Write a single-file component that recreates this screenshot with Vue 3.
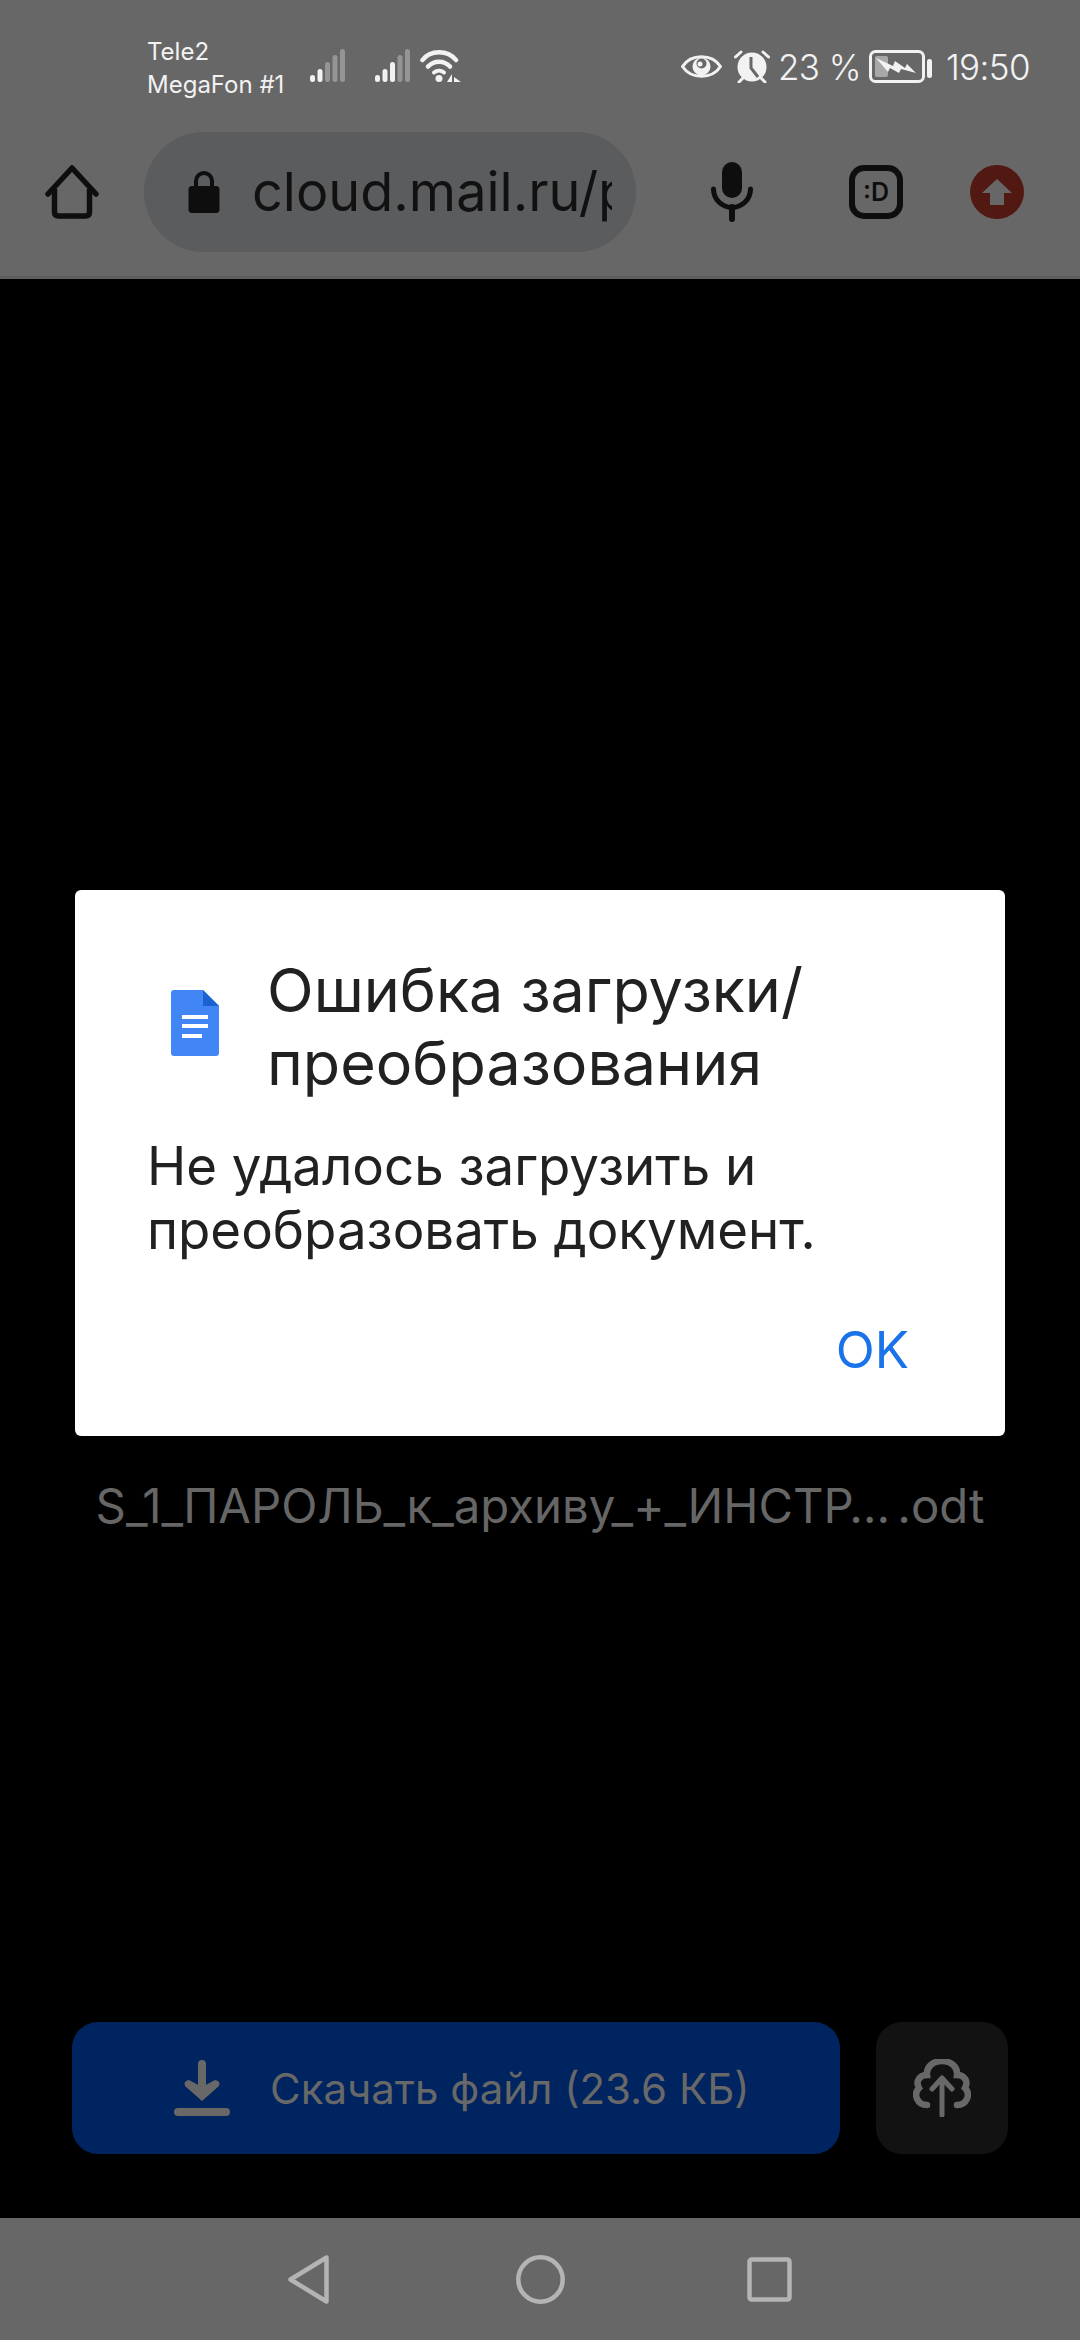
<script setup>
const simBars = [
  { x: 0, y: 26, h: 7 },
  { x: 7.5, y: 20, h: 13 },
  { x: 15, y: 13, h: 20 },
  { x: 22.5, y: 6, h: 27 },
  { x: 30, y: 0, h: 33 }
]
</script>

<template>
  <div class="screen">
    <header class="top">
      <div class="status">
        <div class="carriers">
          <span>Tele2</span>
          <span>MegaFon #1</span>
        </div>
        <svg class="sim" width="35" height="33" viewBox="0 0 35 33">
          <rect v-for="(b, i) in simBars" :key="i" :x="b.x" :y="b.y" width="5" :height="b.h" rx="2.500" :fill="i < 2 ? '#f2f2f2' : '#959595'" />
        </svg>
        <svg class="sim sim-b" width="35" height="33" viewBox="0 0 35 33">
          <rect v-for="(b, i) in simBars" :key="i" :x="b.x" :y="b.y" width="5" :height="b.h" rx="2.500" :fill="i < 3 ? '#f2f2f2' : '#959595'" />
        </svg>
        <svg class="wifi" width="41" height="33" viewBox="0 0 41 33">
          <path d="M2.500 11C10 0.500 28 0.500 36 11" fill="none" stroke="#f2f2f2" stroke-width="4.500" stroke-linecap="round" />
          <path d="M8 17.500C14 11 24 11 30 17.500" fill="none" stroke="#f2f2f2" stroke-width="4.500" stroke-linecap="round" />
          <path d="M14 23.500C17 21 21 21 24 23.500" fill="none" stroke="#f2f2f2" stroke-width="4" stroke-linecap="round" />
          <circle cx="19" cy="29.500" r="3.500" fill="#f2f2f2" />
          <path d="M32 25V33H27ZM34 25V33H41L34 28Z" fill="#f2f2f2" />
        </svg>
        <div class="status-right">
          <svg class="eye" width="41" height="27" viewBox="0 0 41 27">
            <path d="M1.500 13.500C10 0.500 31 0.500 39.500 13.500C31 26.500 10 26.500 1.500 13.500Z" fill="none" stroke="#f2f2f2" stroke-width="3" />
            <circle cx="20.500" cy="13.500" r="9" fill="#f2f2f2" />
            <circle cx="20.500" cy="10.500" r="5" fill="#676767" />
            <circle cx="19" cy="11" r="2.500" fill="#f2f2f2" />
          </svg>
          <svg class="alarm" width="36" height="33" viewBox="0 0 36 33">
            <circle cx="18" cy="17" r="14.500" fill="#f2f2f2" />
            <path d="M17 7V18L24 27" fill="none" stroke="#676767" stroke-width="3" />
            <path d="M1.500 7L7 2M34.500 7L29 2M5 32L9 28M31 32L27 28" stroke="#f2f2f2" stroke-width="3" stroke-linecap="round" />
          </svg>
          <span class="pct">23 %</span>
          <svg class="batt" width="63" height="33" viewBox="0 0 63 33">
            <rect x="1.500" y="1.500" width="53" height="30" rx="5" fill="none" stroke="#f2f2f2" stroke-width="3" />
            <rect x="6" y="6" width="13" height="21" rx="2" fill="#a8a8a8" />
            <path d="M7 8L24 16L26 11L36 18L38 14L47 23L32 19L30 23L21 18L19 22Z" fill="#f2f2f2" />
            <rect x="58" y="9" width="5" height="19" rx="2.500" fill="#f2f2f2" />
          </svg>
          <span class="time">19:50</span>
        </div>
      </div>

      <div class="toolbar">
        <svg class="home" width="54" height="54" viewBox="0 0 54 54">
          <path d="M3 29L27 3L51 29" fill="none" stroke="#0e0e0e" stroke-width="5.500" stroke-linecap="round" stroke-linejoin="round" />
          <path d="M9.500 24V47Q9.500 51 13.500 51H40.500Q44.500 51 44.500 47V24" fill="none" stroke="#0e0e0e" stroke-width="5.500" />
        </svg>
        <div class="urlbar">
          <svg class="lock" width="32" height="42" viewBox="0 0 32 42">
            <path d="M8 18V10A8 8 0 0 1 24 10V18" fill="none" stroke="#0e0e0e" stroke-width="4" />
            <rect x="0.500" y="15" width="31" height="27" rx="3.500" fill="#0e0e0e" />
          </svg>
          <div class="url">cloud.mail.ru/public</div>
        </div>
        <svg class="mic" width="42" height="60" viewBox="0 0 42 60">
          <rect x="11" y="0" width="20" height="36" rx="10" fill="#0e0e0e" />
          <path d="M2.500 27A18.500 18.500 0 0 0 39.500 27" fill="none" stroke="#0e0e0e" stroke-width="5" stroke-linecap="round" />
          <path d="M21 45V57" stroke="#0e0e0e" stroke-width="6" stroke-linecap="round" />
        </svg>
        <div class="smiley"><span>:D</span></div>
        <svg class="update" width="54" height="54" viewBox="0 0 54 54">
          <circle cx="27" cy="27" r="27" fill="#521812" />
          <path d="M27 14L42 28H34V40H20V28H12Z" fill="#676767" />
        </svg>
      </div>
    </header>

    <main class="viewer">
      <section class="dialog">
        <div class="dialog-head">
          <svg class="doc" width="48" height="66" viewBox="0 0 48 66">
            <path d="M3 0H32L48 16V63Q48 66 45 66H3Q0 66 0 63V3Q0 0 3 0Z" fill="#4285f4" />
            <path d="M32 0L48 16H32Z" fill="#1a62d0" />
            <rect x="11" y="25" width="26" height="4" fill="#fff" />
            <rect x="11" y="34" width="26" height="4" fill="#fff" />
            <rect x="11" y="44" width="20" height="4" fill="#fff" />
          </svg>
          <h1>Ошибка загрузки/<br />преобразования</h1>
        </div>
        <p>Не удалось загрузить и<br />преобразовать документ.</p>
        <div class="dialog-actions"><span>OK</span></div>
      </section>

      <div class="filename">S_1_ПАРОЛЬ_к_архиву_+_ИНСТР… .odt</div>

      <div class="actions">
        <div class="download">
          <svg class="dl-icon" width="56" height="56" viewBox="0 0 56 56">
            <path d="M28 4V34" stroke="#686868" stroke-width="8" stroke-linecap="round" />
            <path d="M28 41L11 26Q9 21 15 20L28 27L41 20Q47 21 45 26Z" fill="#686868" />
            <rect x="0" y="48" width="56" height="8" rx="4" fill="#686868" />
          </svg>
          <span>Скачать файл (23.6 КБ)</span>
        </div>
        <div class="cloud">
          <svg width="58" height="58" viewBox="0 0 58 58">
            <path d="M14 46C4 46 0 35 6 29C2 22 7 16 14 16C13 8 20 2 29 2C38 2 45 8 44 16C51 16 56 22 52 29C58 35 54 46 44 46" fill="none" stroke="#686868" stroke-width="6.500" stroke-linecap="round" />
            <path d="M29 56V20M19 30L29 19L39 30" fill="none" stroke="#686868" stroke-width="5" stroke-linecap="round" stroke-linejoin="round" />
          </svg>
        </div>
      </div>
    </main>

    <nav class="nav">
      <svg width="46" height="49" viewBox="0 0 46 49">
        <path d="M38.500 2.500V46.500L2.500 24.500Z" fill="none" stroke="#b4b4b4" stroke-width="4.500" stroke-linejoin="round" />
      </svg>
      <svg width="49" height="49" viewBox="0 0 49 49">
        <circle cx="24.500" cy="24.500" r="22.200" fill="none" stroke="#b4b4b4" stroke-width="4.500" />
      </svg>
      <svg width="45" height="45" viewBox="0 0 45 45">
        <rect x="2.500" y="2.500" width="40" height="40" rx="2" fill="none" stroke="#b4b4b4" stroke-width="4.500" />
      </svg>
    </nav>
  </div>
</template>

<style>
html, body { margin: 0; background: #000; }
</style>

<style scoped>
.screen {
  width: 1080px;
  height: 2340px;
  background: #000;
  display: flex;
  flex-direction: column;
  overflow: hidden;
  font-family: Inter, "Noto Sans", sans-serif;
}
.top {
  height: 279px;
  flex: none;
  box-sizing: border-box;
  background: #676767;
  border-bottom: 3px solid #5e5e5e;
  display: flex;
  flex-direction: column;
}
.status {
  height: 130px;
  box-sizing: border-box;
  padding: 35px 50px 0 147px;
  display: flex;
  align-items: flex-start;
  color: #f2f2f2;
}
.carriers {
  width: 163px;
  flex: none;
  display: flex;
  flex-direction: column;
  font-size: 24px;
  line-height: 33px;
  white-space: nowrap;
}
.sim { margin-top: 14px; flex: none; }
.sim-b { margin-left: 30px; }
.wifi { margin-top: 14px; margin-left: 10px; flex: none; }
.status-right {
  margin-left: auto;
  display: flex;
  align-items: center;
  height: 33px;
  margin-top: 15px;
}
.eye { flex: none; }
.alarm { margin-left: 12px; flex: none; }
.pct { font-size: 35px; letter-spacing: -0.6px; margin-left: 8px; margin-right: 8px; white-space: nowrap; font-weight: 300; }
.batt { flex: none; }
.time { font-size: 35px; letter-spacing: -0.6px; margin-left: 14px; font-weight: 300; }
.toolbar {
  flex: 1;
  display: flex;
  align-items: center;
  padding: 0 0 22px 45px;
}
.home { flex: none; }
.urlbar {
  margin-left: 45px;
  width: 492px;
  height: 120px;
  border-radius: 60px;
  background: #5b5c5e;
  box-sizing: border-box;
  padding: 0 24px 0 44px;
  display: flex;
  align-items: center;
  color: #111;
  flex: none;
}
.lock { flex: none; }
.url {
  margin-left: 32px;
  font-size: 54px;
  line-height: 70px;
  white-space: nowrap;
  overflow: hidden;
  flex: 1;
  min-width: 0;
  font-weight: 400;
}
.mic { margin-left: 75px; flex: none; }
.smiley {
  margin-left: 96px;
  width: 54px;
  height: 54px;
  box-sizing: border-box;
  border: 6px solid #0e0e0e;
  border-radius: 15px;
  display: flex;
  align-items: center;
  justify-content: center;
  color: #0e0e0e;
  font-size: 25px;
  font-weight: 600;
  flex: none;
}
.update { margin-left: 67px; flex: none; }
.viewer {
  flex: 1;
  display: flex;
  flex-direction: column;
  padding-top: 611px;
}
.dialog {
  margin-left: 75px;
  width: 930px;
  height: 546px;
  box-sizing: border-box;
  background: #fff;
  border-radius: 6px;
  padding: 64px 0 0 72px;
  color: #212121;
}
.dialog-head {
  display: flex;
  align-items: center;
}
.doc { margin-left: 24px; margin-bottom: 8px; flex: none; }
h1 {
  margin: 0 0 0 48px;
  font-size: 61px;
  font-weight: 400;
  line-height: 73px;
  white-space: nowrap;
}
p {
  margin: 34px 0 0;
  font-size: 52.800px;
  font-weight: 400;
  line-height: 64px;
  white-space: nowrap;
}
.dialog-actions {
  margin-top: 58px;
  padding-right: 96px;
  display: flex;
  justify-content: flex-end;
  font-size: 51px;
  line-height: 60px;
  color: #1a73e8;
}
.filename {
  margin-top: 40px;
  text-align: center;
  font-size: 47.300px;
  word-spacing: -6px;
  line-height: 60px;
  color: #666;
  white-space: nowrap;
}
.actions {
  margin: 486px 0 0 72px;
  display: flex;
  gap: 36px;
}
.download {
  width: 768px;
  height: 132px;
  border-radius: 26px;
  background: #00245f;
  display: flex;
  align-items: center;
  color: #686868;
  font-size: 42px;
  padding-left: 102px;
  box-sizing: border-box;
}
.download span { margin-left: 40px; white-space: nowrap; }
.dl-icon { flex: none; }
.cloud {
  width: 132px;
  height: 132px;
  border-radius: 26px;
  background: #121212;
  display: flex;
  align-items: center;
  justify-content: center;
}
.nav {
  height: 122px;
  flex: none;
  background: #676767;
  display: flex;
  align-items: center;
  padding-left: 288px;
  gap: 182px;
}
</style>
